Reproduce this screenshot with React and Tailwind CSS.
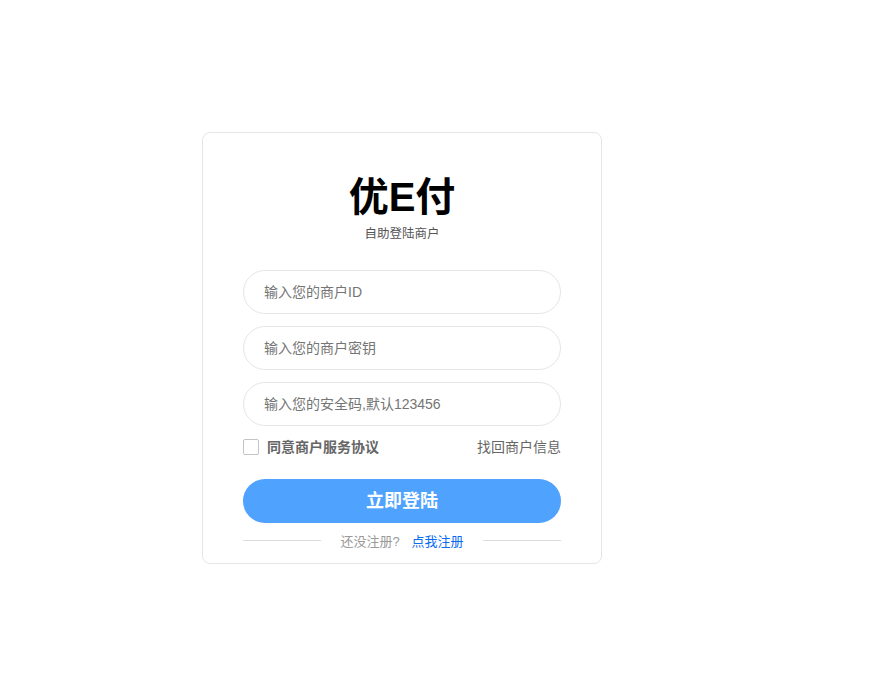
import React, { useState } from "react";

const font = { fontFamily: '"Liberation Sans", "Noto Sans CJK SC", sans-serif' };

const Field = ({ placeholder, type = "text" }) => (
  <input
    type={type}
    placeholder={placeholder}
    className="h-[44px] w-full rounded-full border border-[#e6e6e6] bg-white px-5 text-sm text-[#333] outline-none placeholder:text-[#757575]"
  />
);

const App = () => {
  const [agree, setAgree] = useState(false);

  return (
    <div className="min-h-[682px] bg-white pl-[202px] pt-[132px]" style={font}>
      <div className="flex w-[400px] flex-col rounded-lg border border-[#e6e6e6] px-10 pb-[14px] pt-[44px]">
        <h1 className="text-center text-[40px] font-semibold leading-[40px] text-black">优E付</h1>
        <p className="mt-[9px] text-center text-[12.5px] leading-4 text-[#555]">自助登陆商户</p>

        <div className="mt-[28px] flex flex-col gap-3">
          <Field placeholder="输入您的商户ID" />
          <Field placeholder="输入您的商户密钥" type="password" />
          <Field placeholder="输入您的安全码,默认123456" />
        </div>

        {/* agreement + recover */}
        <div className="mt-[11px] flex h-5 items-center justify-between text-sm text-[#666]">
          <label className="flex items-center gap-2 font-bold">
            <span
              onClick={() => setAgree(!agree)}
              className="h-4 w-4 rounded-[2px] border border-[#c4c4c4] bg-white"
            />
            同意商户服务协议
          </label>
          <a className="cursor-pointer">找回商户信息</a>
        </div>

        <button className="mt-[22px] h-[44px] w-full rounded-full bg-[#4fa2fe] text-lg font-semibold text-white">
          立即登陆
        </button>

        <div className="mt-[8px] flex h-[18px] items-center">
          <div className="h-px flex-1 bg-[#dcdcdc]" />
          <div className="mx-5 pt-[3px] text-[13px] text-[#999]">
            还没注册? <a className="ml-2 cursor-pointer text-[#0a6cf0]">点我注册</a>
          </div>
          <div className="h-px flex-1 bg-[#dcdcdc]" />
        </div>
      </div>
    </div>
  );
};

export default App;
